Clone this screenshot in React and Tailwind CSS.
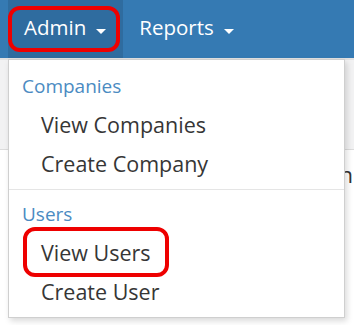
import { useState } from "react";

const groups = [
  { title: "Companies", items: ["View Companies", "Create Company"] },
  { title: "Users", items: ["View Users", "Create User"] },
];

function Caret() {
  return (
    <span className="ml-[10px] inline-block w-0 h-0 border-l-[5px] border-r-[5px] border-t-[5px] border-l-transparent border-r-transparent border-t-white translate-y-[-1px]" />
  );
}

export default function App() {
  const [open] = useState("Admin");

  return (
    <div className="relative w-[354px] h-[325px] overflow-hidden bg-white font-['Open_Sans',sans-serif]">
      {/* navbar */}
      <nav className="h-[58px] bg-[#357ab3] flex pl-[8px] text-white text-[20.5px]">
        <div className={`relative h-full pl-[16px] pr-[17px] pt-[14px] leading-[27px] ${open === "Admin" ? "bg-[#2f6c9f]" : ""}`}>
          Admin
          <Caret />
          <span className="absolute left-[0px] top-[6px] w-[112px] h-[46px] border-[4px] border-[#ee0000] rounded-[12px]" />
        </div>
        <div className="h-full pl-[16px] pr-[16px] pt-[14px] leading-[27px]">
          Reports
          <Caret />
        </div>
      </nav>

      {/* page behind the menu */}
      <div className="h-[92px] bg-[#f2f2f3] border-t-[2px] border-t-[#e2e2e2] border-b border-b-[#dcdcdc]" />
      <div className="flex justify-end pr-px pt-[9px]">
        <h1 className="text-[22px] leading-[30px] text-[#333]">Admin</h1>
      </div>

      {/* dropdown */}
      <div className="absolute left-[8px] top-[59px] w-[337px] h-[259px] bg-white border border-[#cfcfcf] shadow-[2px_3px_6px_rgba(0,0,0,0.15)] pt-[13px]">
        {groups.map((g, gi) => (
          <div key={g.title}>
            {gi > 0 && <div className="h-px bg-[#e5e5e5] mt-[6px] mb-[11px]" />}
            <div className="pl-[13px] text-[19px] leading-[26px] text-[#4b8bc2]">{g.title}</div>
            <div className="mt-[6px]">
              {g.items.map((it) => (
                <div key={it} className="relative pl-[32px] text-[21.5px] leading-[39px] text-[#363636]">
                  {it}
                  {it === "View Users" && (
                    <span className="absolute left-[14px] top-[-6px] w-[146px] h-[50px] border-[4px] border-[#ee0000] rounded-[12px]" />
                  )}
                </div>
              ))}
            </div>
          </div>
        ))}
      </div>
    </div>
  );
}
